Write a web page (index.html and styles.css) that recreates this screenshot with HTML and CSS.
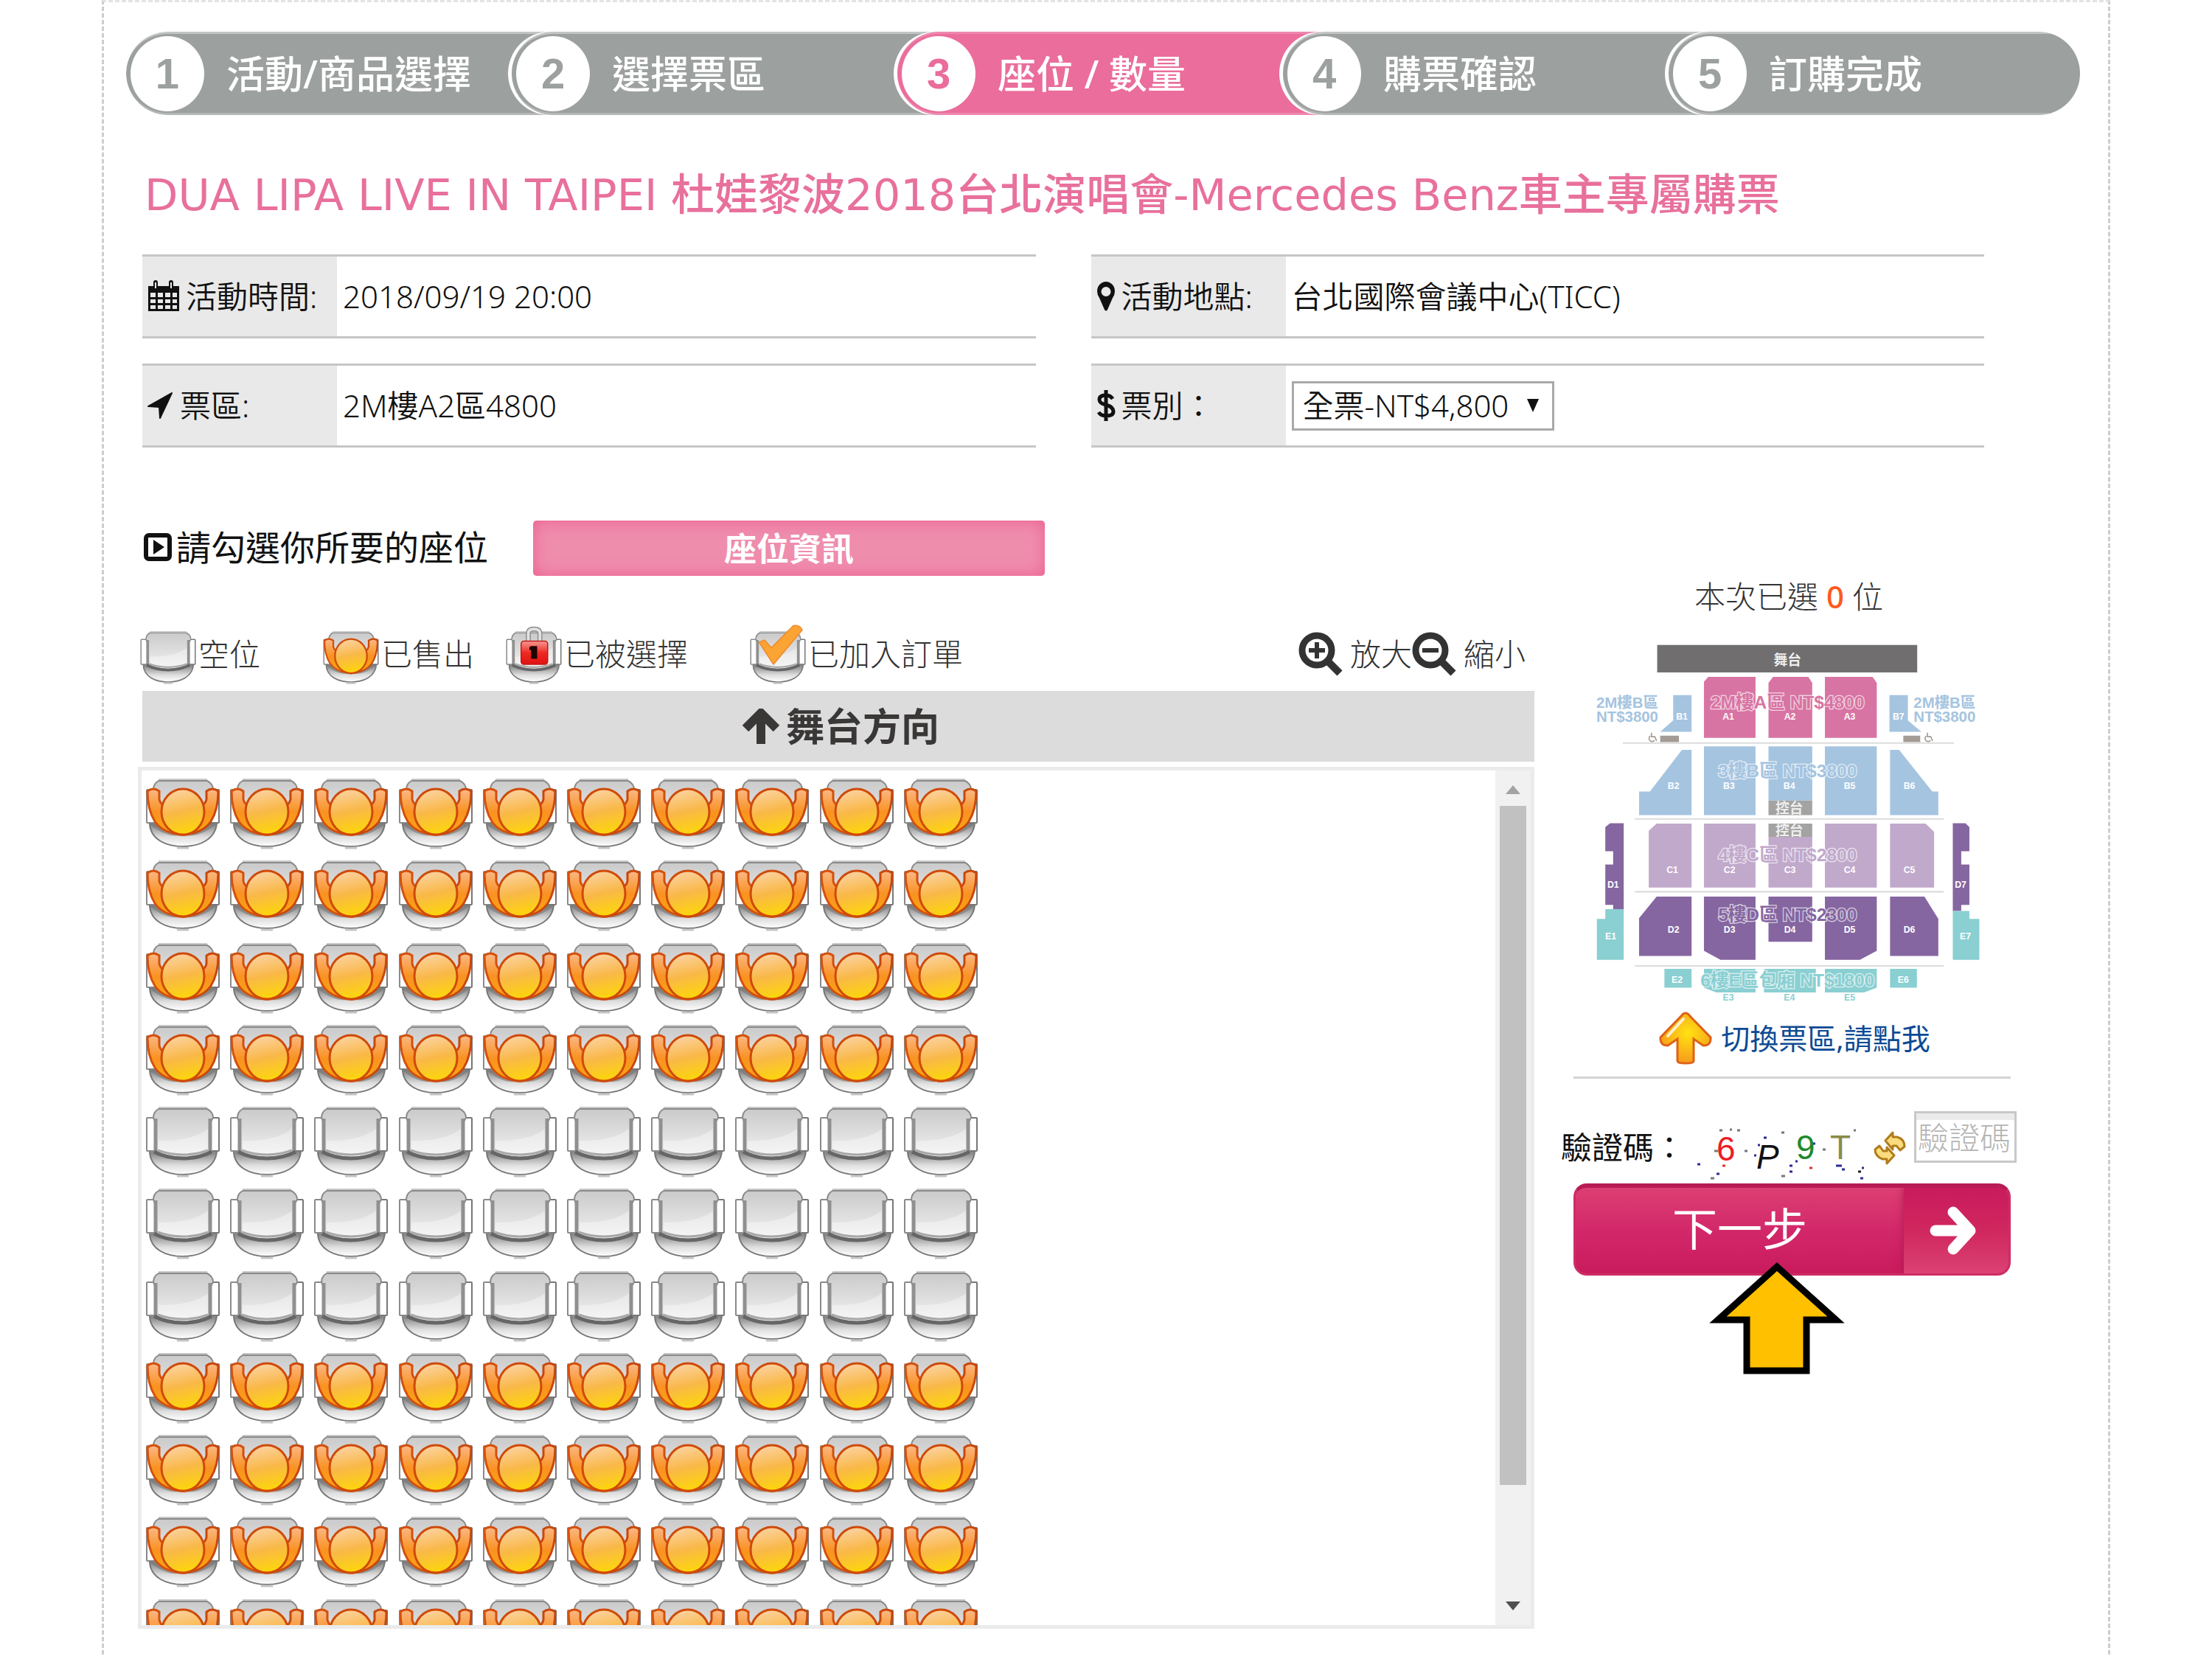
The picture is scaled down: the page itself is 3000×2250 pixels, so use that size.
FILE: index.html
```html
<!DOCTYPE html>
<html lang="zh-Hant">
<head>
    <meta charset="UTF-8">
    <meta name="viewport" content="width=device-width, initial-scale=1.0">
    <title>座位 / 數量</title>
    <link rel="stylesheet" href="styles.css">
</head>
<body>

<!-- Seat symbols -->
<svg class="symbols" aria-hidden="true">
    <defs>
        <linearGradient id="g-back" x1="0" y1="0" x2="0" y2="1">
            <stop offset="0" stop-color="#cacaca"/>
            <stop offset="1" stop-color="#f2f2f2"/>
        </linearGradient>
        <linearGradient id="g-base" x1="0" y1="0" x2="0" y2="1">
            <stop offset="0.1" stop-color="#8a8a8a"/>
            <stop offset="0.6" stop-color="#dedede"/>
            <stop offset="1" stop-color="#ffffff"/>
        </linearGradient>
        <linearGradient id="g-head" x1="0.3" y1="0" x2="0.5" y2="1">
            <stop offset="0" stop-color="#fcd3a4"/>
            <stop offset="0.5" stop-color="#f9b848"/>
            <stop offset="1" stop-color="#fdd60a"/>
        </linearGradient>
        <linearGradient id="g-arm" x1="0" y1="0" x2="0" y2="1">
            <stop offset="0" stop-color="#fbb887"/>
            <stop offset="0.5" stop-color="#f99222"/>
            <stop offset="1" stop-color="#fba60e"/>
        </linearGradient>
        <linearGradient id="g-lock" x1="0" y1="0" x2="0" y2="1">
            <stop offset="0" stop-color="#f79a94"/>
            <stop offset="0.5" stop-color="#ee2a22"/>
            <stop offset="1" stop-color="#e01212"/>
        </linearGradient>
        <radialGradient id="g-up" cx="0.55" cy="0.4" r="0.6">
            <stop offset="0" stop-color="#ffe312"/>
            <stop offset="1" stop-color="#f79a1c"/>
        </radialGradient>
    </defs>
    <symbol id="seat-frame" viewBox="0 0 100 96" overflow="visible">
        <path d="M5 60Q5 76 20 85Q32 92 50 92Q68 92 80 85Q95 76 96 60Z" fill="url(#g-base)" stroke="#777" stroke-width="2"/>
        <path d="M42 94H58" stroke="#c4c4c4" stroke-width="3"/>
        <rect x="1" y="15" width="13" height="45" rx="1" fill="#fff" stroke="#8a8a8a" stroke-width="2"/>
        <rect x="86" y="15" width="13" height="45" rx="1" fill="#fff" stroke="#777" stroke-width="2"/>
        <path d="M10 15Q10 7 17 3H83Q91 7 91 15L87 22V61Q70 69 50 69Q30 69 13 61V22Z" fill="url(#g-back)" stroke="#8a8a8a" stroke-width="2"/>
        <path d="M17 1H83" stroke="#c8c8c8" stroke-width="2"/>
    </symbol>
    <symbol id="seat-free" viewBox="0 0 100 96" overflow="visible">
        <use href="#seat-frame" width="100" height="96"/>
        <path d="M17 46Q62 47 84 30V60Q70 64 50 64Q30 64 17 60Z" fill="#fff" opacity="0.35"/>
        <path d="M13 16V61M87 16V61" stroke="#909090" stroke-width="5"/>
        <path d="M11 61Q28 70 50 70Q72 70 89 61" fill="none" stroke="#666" stroke-width="5"/>
        <path d="M16 59Q32 65 50 65Q68 65 84 59" fill="none" stroke="#a8a8a8" stroke-width="3"/>
    </symbol>
    <symbol id="seat-sold" viewBox="0 0 100 96" overflow="visible">
        <use href="#seat-frame" width="100" height="96"/>
        <path d="M3 60Q28 82 50 76Q72 82 97 60Z" fill="#777" opacity="0.6"/>
        <path d="M2 17Q10 11 18 17V28Q19 33 24 37V56L46 76Q22 73 12 58Q2 42 2 17Z" fill="url(#g-arm)" stroke="#d4500c" stroke-width="3"/>
        <path d="M98 17Q90 11 82 17V28Q81 33 76 37V56L54 76Q78 73 88 58Q98 42 98 17Z" fill="url(#g-arm)" stroke="#c8480c" stroke-width="3"/>
        <ellipse cx="50" cy="45" rx="29" ry="31" fill="url(#g-head)" stroke="#cf4a0a" stroke-width="3"/>
    </symbol>
    <symbol id="seat-locked" viewBox="0 0 100 96" overflow="visible">
        <use href="#seat-free" width="100" height="96"/>
        <path d="M40 20V4Q40 -4 50 -4Q61 -4 61 4V20" fill="none" stroke="#8f8f8f" stroke-width="9"/>
        <path d="M40 20V4Q40 -4 50 -4Q61 -4 61 4V20" fill="none" stroke="#e2e2e2" stroke-width="5"/>
        <rect x="27" y="18" width="48" height="42" rx="5" fill="url(#g-lock)" stroke="#c21a14" stroke-width="2"/>
        <path d="M45 27H56V50H45V34H42V29Z" fill="#1c0504"/>
    </symbol>
    <symbol id="seat-added" viewBox="0 0 100 96" overflow="visible">
        <use href="#seat-free" width="100" height="96"/>
        <path d="M16 20L26 16L38 30L78 -10Q90 -12 94 -2L42 60Z" fill="#fba434" stroke="#f08a2a" stroke-width="2" stroke-linejoin="round"/>
    </symbol>
</svg>

<div class="page">
    <ol class="steps">
        <li class="step"><span class="step-no">1</span>活動/商品選擇</li>
        <li class="step"><span class="step-no">2</span>選擇票區</li>
        <li class="step active"><span class="step-no">3</span>座位 / 數量</li>
        <li class="step"><span class="step-no">4</span>購票確認</li>
        <li class="step"><span class="step-no">5</span>訂購完成</li>
    </ol>

    <h1>DUA LIPA LIVE IN TAIPEI 杜娃黎波2018台北演唱會-Mercedes Benz車主專屬購票</h1>

    <dl class="info">
        <div class="info-row">
            <dt>
                <svg width="44" height="44" viewBox="0 0 44 44"><path d="M1 8H8V3Q8 0 11 0T14 3V8H29V3Q29 0 32 0T35 3V8H43V42H1Z" fill="#111"/><path d="M4 17H11V23H4ZM14 17H21V23H14ZM24 17H31V23H24ZM34 17H40V23H34ZM4 26H11V31H4ZM14 26H21V31H14ZM24 26H31V31H24ZM34 26H40V31H34ZM4 34H11V39H4ZM14 34H21V39H14ZM24 34H31V39H24ZM34 34H40V39H34Z" fill="#e9e9e9"/><path d="M11 3V11M32 3V11" stroke="#e9e9e9" stroke-width="2"/></svg>
                活動時間:
            </dt>
            <dd>2018/09/19 20:00</dd>
        </div>
        <div class="info-row">
            <dt>
                <svg width="26" height="40" viewBox="0 0 26 40"><path d="M13 0A12 13 0 0 1 25 13Q25 18 22 22L15 38Q13 41 11 38L4 22Q1 18 1 13A12 13 0 0 1 13 0ZM13 7A6 6 0 0 0 13 20A6 6 0 0 0 13 7Z" fill="#111"/></svg>
                活動地點:
            </dt>
            <dd>台北國際會議中心(TICC)</dd>
        </div>
        <div class="info-row">
            <dt>
                <svg width="36" height="36" viewBox="0 0 36 36"><path d="M33 1L17 35L16 20L1 19Z" fill="#111" stroke="#111" stroke-width="2" stroke-linejoin="round"/></svg>
                票區:
            </dt>
            <dd>2M樓A2區4800</dd>
        </div>
        <div class="info-row">
            <dt>
                <svg width="26" height="44" viewBox="0 0 26 44"><path d="M22 13Q19 8 13 8Q4 8 4 14Q4 19 13 21Q23 24 23 30Q23 36 13 36Q6 36 3 31M13 1V43" fill="none" stroke="#111" stroke-width="5"/></svg>
                <label for="ticket">票別：</label>
            </dt>
            <dd>
                <span class="select-box">
                    <select id="ticket"><option>全票-NT$4,800</option></select>
                    <svg class="caret" width="16" height="18" viewBox="0 0 16 18"><path d="M0 0H16L8 18Z" fill="#111"/></svg>
                </span>
            </dd>
        </div>
    </dl>

    <div class="columns">
        <main>
            <div class="pick-row">
                <h2>
                    <svg width="38" height="38" viewBox="0 0 38 38"><rect x="3" y="3" width="32" height="32" rx="4" fill="none" stroke="#111" stroke-width="6"/><path d="M13 9L28 19L13 29Z" fill="#111"/></svg>
                    請勾選你所要的座位
                </h2>
                <button type="button" class="seat-info">座位資訊</button>
            </div>

            <div class="legend-row">
                <ul class="legend">
                    <li><svg width="76" height="72"><use href="#seat-free"/></svg>空位</li>
                    <li><svg width="76" height="72"><use href="#seat-sold"/></svg>已售出</li>
                    <li><svg width="76" height="72"><use href="#seat-locked"/></svg>已被選擇</li>
                    <li><svg width="76" height="72"><use href="#seat-added"/></svg>已加入訂單</li>
                </ul>
                <div class="zoom">
                    <button type="button">
                        <svg width="60" height="60" viewBox="0 0 60 60"><circle cx="25" cy="25" r="20" fill="none" stroke="#333" stroke-width="9"/><path d="M40 40L56 56" stroke="#333" stroke-width="10"/><path d="M14 25H36M25 14V36" stroke="#333" stroke-width="6"/></svg>
                        放大
                    </button>
                    <button type="button">
                        <svg width="60" height="60" viewBox="0 0 60 60"><circle cx="25" cy="25" r="20" fill="none" stroke="#333" stroke-width="9"/><path d="M40 40L56 56" stroke="#333" stroke-width="10"/><path d="M14 25H36" stroke="#333" stroke-width="6"/></svg>
                        縮小
                    </button>
                </div>
            </div>

            <div class="stage">
                <svg width="52" height="48" viewBox="0 0 52 48"><path d="M26 48V8M5 27L26 6L47 27" fill="none" stroke="#3a3737" stroke-width="12"/></svg>
                舞台方向
            </div>

            <div class="seat-box">
                <div class="seats" id="seats"></div>
                <div class="scrollbar">
                    <svg width="20" height="12" viewBox="0 0 20 12"><path d="M10 0L20 12H0Z" fill="#a3a3a3"/></svg>
                    <div class="thumb"></div>
                    <svg width="20" height="12" viewBox="0 0 20 12"><path d="M0 0H20L10 12Z" fill="#505050"/></svg>
                </div>
            </div>
        </main>

        <aside>
            <p class="picked">本次已選 <b>0</b> 位</p>

            <svg class="map" viewBox="150 240 1320 1210">
                <rect x="364" y="254" width="862" height="91" fill="#706e6f"/>
                <g fill="#d874a3">
                    <path d="M519 376L533 360H690V562H519Z"/>
                    <path d="M733 380L748 360H865L878 380V562H733Z"/>
                    <path d="M920 360H1078L1092 380V562H920Z"/>
                </g>
                <g fill="#a5c4e0">
                    <path d="M417 420H478V542H374L417 504Z"/>
                    <path d="M1134 420H1195V504L1240 542H1134Z"/>
                    <path d="M446 602H478V818H304V740H340Z"/>
                    <path d="M519 590H690V818H519ZM733 590H878V770H733ZM920 590H1092V818H920Z"/>
                    <path d="M1136 602H1166L1276 740H1296V818H1136Z"/>
                </g>
                <path d="M733 770H878V818H733ZM733 846H878V890H733Z" fill="#a3a3a3"/>
                <path d="M374 555H436V576H374ZM1180 555H1236V576H1180Z" fill="#a39b96"/>
                <path d="M250 579H1348M290 831H1314M290 1072H1314M290 1318H1314" stroke="#dcdcdc" stroke-width="5"/>
                <g fill="none" stroke="#a39b96" stroke-width="4">
                    <path d="M345 545V558H356L362 572M341 556A10 10 0 1 0 355 570"/>
                    <path d="M1260 545V558H1271L1277 572M1256 556A10 10 0 1 0 1270 570"/>
                </g>
                <g fill="#c1a9cb">
                    <path d="M336 870L362 846H478V1058H336Z"/>
                    <path d="M519 846H690V1058H519ZM733 890H878V1058H733ZM920 846H1092V1058H920Z"/>
                    <path d="M1136 846H1254L1282 874V1058H1136Z"/>
                </g>
                <g fill="#8566a0">
                    <path d="M192 858L208 845H253V1136H218V1116H192V982H218V938H192Z"/>
                    <path d="M1344 845H1386L1399 858V938H1372V982H1399V1116H1372V1136H1344Z"/>
                    <path d="M362 1088H478V1285H304V1160Z"/>
                    <path d="M519 1088H690V1298H574L519 1268ZM733 1088H878V1238H733ZM920 1088H1092V1268L1036 1298H920Z"/>
                    <path d="M1136 1088H1250L1296 1162V1285H1136Z"/>
                </g>
                <g fill="#8acfd2">
                    <path d="M192 1130H253V1298H164V1162H192Z"/>
                    <path d="M1344 1136H1399V1162H1432V1298H1344Z"/>
                    <path d="M388 1328H478V1390H388ZM1136 1328H1225V1390H1136Z"/>
                    <path d="M519 1328H690V1406H560L519 1390ZM718 1328H890V1406H718ZM920 1328H1092V1390L1050 1406H920Z"/>
                </g>
                <g class="map-block">
                    <text x="796" y="320" class="map-stage">舞台</text>
                    <text x="802" y="812" class="map-stage">控台</text>
                    <text x="802" y="886" class="map-stage">控台</text>
                    <text x="446" y="502">B1</text><text x="1164" y="502">B7</text>
                    <text x="600" y="502">A1</text><text x="804" y="502">A2</text><text x="1002" y="502">A3</text>
                    <text x="418" y="732">B2</text><text x="602" y="732">B3</text><text x="802" y="732">B4</text><text x="1002" y="732">B5</text><text x="1200" y="732">B6</text>
                    <text x="414" y="1010">C1</text><text x="604" y="1010">C2</text><text x="804" y="1010">C3</text><text x="1002" y="1010">C4</text><text x="1200" y="1010">C5</text>
                    <text x="218" y="1058">D1</text><text x="1370" y="1058">D7</text>
                    <text x="418" y="1208">D2</text><text x="604" y="1208">D3</text><text x="804" y="1208">D4</text><text x="1002" y="1208">D5</text><text x="1200" y="1208">D6</text>
                    <text x="210" y="1230">E1</text><text x="1386" y="1230">E7</text>
                    <text x="430" y="1374">E2</text><text x="1180" y="1374">E6</text>
                </g>
                <g class="map-price">
                    <text x="796" y="464" fill="#d874a3">2M樓A區 NT$4800</text>
                    <text x="796" y="692" fill="#a5c4e0">3樓B區 NT$3800</text>
                    <text x="796" y="972" fill="#c1a9cb">4樓C區 NT$2800</text>
                    <text x="796" y="1170" fill="#8566a0">5樓D區 NT$2300</text>
                    <text x="796" y="1386" fill="#8acfd2">6樓E區包廂 NT$1800</text>
                </g>
                <g class="map-side">
                    <text x="162" y="462">2M樓B區</text><text x="162" y="510">NT$3800</text>
                    <text x="1214" y="462">2M樓B區</text><text x="1214" y="510">NT$3800</text>
                </g>
                <g class="map-tail">
                    <text x="600" y="1434">E3</text><text x="802" y="1434">E4</text><text x="1002" y="1434">E5</text>
                </g>
            </svg>

            <a class="switch" href="#">
                <svg width="72" height="72" viewBox="0 0 72 72"><path d="M36 2Q39 2 41 5L70 35Q71 46 60 46L47 37V67Q47 70 36 70T25 67V37L12 46Q1 46 2 35L31 5Q33 2 36 2Z" fill="url(#g-up)" stroke="#dd6218" stroke-width="3"/><path d="M12 33L33 10" stroke="#fff0d0" stroke-width="4" stroke-linecap="round"/></svg>
                切換票區,請點我
            </a>
            <hr>

            <div class="captcha-row">
                <label for="captcha">驗證碼：</label>
                <svg class="captcha" width="236" height="88" viewBox="0 0 236 88">
                    <text x="34" y="62" fill="#ee1c24">6</text>
                    <text x="88" y="73" fill="#111" font-style="italic">P</text>
                    <text x="142" y="60" fill="#1e8a2c">9</text>
                    <text x="188" y="60" fill="#8a8a4a">T</text>
                    <path d="M38 21H42M52 20H55M62 21H66M122 24H126M220 21H223M31 49H36M72 49H76M178 47H182M122 83H127M26 86H31" stroke="#777" stroke-width="3"/>
                    <path d="M8 67H12M34 80H38M98 31H102M90 41H93M85 55H88M165 39H168M133 69H137M133 77H137M196 69H204M204 74H208M231 72H234M229 86H233M141 63H144" stroke="#2c2c96" stroke-width="3"/>
                    <path d="M42 69H46M160 72H164" stroke="#e03030" stroke-width="3"/>
                    <path d="M226 77H230" stroke="#222" stroke-width="3"/>
                </svg>
                <svg width="48" height="48" viewBox="0 0 48 48"><path d="M18 15L28 4V10H34Q44 13 44 23L38 28L33 22H28V27Z" fill="#fbdc7c" stroke="#b07c1c" stroke-width="3" stroke-linejoin="round"/><path d="M30 35L20 46V40H14Q4 36 4 27L10 22L15 29H20V24Z" fill="#fbdc7c" stroke="#b07c1c" stroke-width="3" stroke-linejoin="round"/></svg>
                <input type="text" id="captcha" name="captcha" placeholder="驗證碼">
            </div>

            <div class="next-wrap">
                <button type="button" class="next">
                    <span class="next-text">下一步</span>
                    <span class="next-arrow">
                        <svg width="68" height="72" viewBox="0 0 68 72"><path d="M10 36H52M34 11L57 36L34 61" fill="none" stroke="#fff" stroke-width="15" stroke-linecap="round" stroke-linejoin="round"/></svg>
                    </span>
                </button>
                <svg class="pointer" width="188" height="154" viewBox="0 0 188 154"><path d="M94 7L174 79H134V148H53V79H14Z" fill="#ffc000" stroke="#000" stroke-width="9"/></svg>
            </div>
        </aside>
    </div>
</div>

<script src="script.js"></script>
</body>
</html>
```

FILE: styles.css
```css
* {
    box-sizing: border-box;
}
body {
    margin: 0;
    background-color: #fff;
    color: #111;
    font-family: "Noto Sans", "Noto Sans CJK TC", sans-serif;
    font-size: 42px;
    line-height: 60px;
}
h1, h2, p, ol, ul, dl, dd {
    margin: 0;
    padding: 0;
    list-style: none;
}
button, select, input {
    font: inherit;
    color: inherit;
    padding: 0;
    background: none;
    border: none;
}
svg {
    flex: none;
}
.symbols {
    position: absolute;
    width: 0;
    height: 0;
}
.page {
    margin: 0 138px;
    padding: 40px 0 35px;
    border: 3px dashed #cdcdcd;
    border-top-color: #e3e3e3;
    border-bottom: none;
}

/* Steps */
.steps {
    display: grid;
    grid-template-columns: repeat(4, 15fr) 16fr;
    margin: 0 38px 0 30px;
    border-radius: 57px;
    overflow: hidden;
}
.step {
    display: flex;
    align-items: center;
    gap: 30px;
    height: 113px;
    margin-right: -60px;
    padding-left: 6px;
    background-color: #9ca09e;
    border-top: 3px solid #c3c5c4;
    border-bottom: 3px solid #b4b7b5;
    border-radius: 57px 0 0 57px;
    box-shadow: -5px 0 0 #fff;
    color: #fff;
    font-size: 52px;
    font-weight: 500;
}
.step:last-child {
    margin-right: 0;
}
.step-no {
    width: 100px;
    height: 102px;
    border-radius: 50%;
    background-color: #fff;
    color: #9ca09e;
    font-family: "Liberation Sans", Arial, sans-serif;
    font-size: 58px;
    font-weight: bold;
    line-height: 102px;
    text-align: center;
}
.step.active {
    background-color: #ea6d9b;
    border-color: #ee88ae;
}
.step.active .step-no {
    color: #ea6d9b;
}

h1 {
    margin: 67px 55px 0;
    color: #e8709c;
    font-family: "DejaVu Sans", "Noto Sans CJK TC", sans-serif;
    font-size: 59px;
    font-weight: 500;
    line-height: 84px;
}

/* Event info */
.info {
    display: grid;
    grid-template-columns: 1fr 1fr;
    gap: 34px 75px;
    margin: 38px 168px 0 52px;
    font-weight: 350;
}
.info-row {
    display: flex;
    height: 114px;
    border-top: 3px solid #c6c6c6;
    border-bottom: 3px solid #c6c6c6;
}
dt {
    display: flex;
    align-items: center;
    gap: 8px;
    width: 264px;
    padding-left: 7px;
    background-color: #e9e9e9;
}
dd {
    display: flex;
    align-items: center;
    padding-left: 8px;
}
.select-box {
    display: flex;
    align-items: center;
    width: 356px;
    height: 67px;
    padding: 0 18px 0 12px;
    border: 3px solid #a9a9a9;
}
select {
    flex: 1;
    appearance: none;
    line-height: 60px;
    outline: none;
}

/* Seats and sidebar */
.columns {
    display: flex;
    gap: 36px;
    margin: 99px 124px 0 46px;
}
main {
    flex: 1;
}
.pick-row {
    display: flex;
    align-items: center;
    height: 75px;
    padding-left: 8px;
}
h2 {
    display: flex;
    align-items: center;
    gap: 6px;
    width: 528px;
    padding-bottom: 4px;
    font-size: 47px;
    font-weight: normal;
}
.seat-info {
    width: 694px;
    height: 75px;
    border-radius: 5px;
    background-color: #ef8dad;
    box-shadow: inset 0 0 22px #ec5f92;
    color: #fff;
    font-size: 44px;
    font-weight: bold;
}
.legend-row {
    display: flex;
    justify-content: space-between;
    align-items: flex-end;
    height: 156px;
    padding: 0 12px 9px 3px;
    color: #333;
    line-height: 82px;
    font-weight: 300;
}
.legend {
    display: grid;
    grid-template-columns: 248px 248px 331px auto;
}
.legend li {
    display: flex;
    align-items: flex-end;
    gap: 3px;
}
.legend svg {
    overflow: visible;
}
.zoom {
    display: flex;
}
.zoom button {
    display: flex;
    align-items: center;
    gap: 10px;
}
.stage {
    display: flex;
    justify-content: center;
    align-items: center;
    gap: 8px;
    height: 96px;
    margin-left: 6px;
    padding-left: 6px;
    background-color: #dcdcdc;
    color: #3a3737;
    font-size: 52px;
    font-weight: bold;
}
.seat-box {
    display: flex;
    justify-content: space-between;
    height: 1169px;
    margin-top: 7px;
    border: 5px solid #ebebeb;
    overflow: hidden;
}
.seats {
    display: grid;
    grid-template-columns: repeat(10, 1fr);
    grid-template-rows: repeat(11, 1fr);
    width: 1142px;
    height: 1224px;
    margin: 11px 0 0 6px;
}
.seat {
    display: block;
    width: 100px;
    height: 96px;
}
.seat svg {
    display: block;
    width: 100px;
    height: 96px;
}
.scrollbar {
    display: flex;
    flex-direction: column;
    align-items: center;
    width: 48px;
    padding: 20px 0;
    background-color: #f1f1f1;
}
.thumb {
    width: 36px;
    height: 921px;
    margin: 16px 0 auto;
    background-color: #c1c1c1;
}

aside {
    width: 618px;
    padding-top: 73px;
}
.picked {
    text-align: center;
    color: #333;
    font-weight: 300;
}
.picked b {
    color: #fb5a1e;
    font-weight: 500;
}
.map {
    display: block;
    width: 540px;
    margin: 30px 35px 0 auto;
}
.map text {
    font-family: "Liberation Sans", "Noto Sans CJK TC", sans-serif;
    font-weight: bold;
}
.map-block text {
    fill: #fff;
    font-size: 30px;
    text-anchor: middle;
}
.map-block .map-stage {
    font-size: 46px;
    fill: #eee;
}
.map-price text {
    font-size: 60px;
    text-anchor: middle;
    stroke: #fff;
    stroke-width: 6px;
    stroke-opacity: 0.7;
    paint-order: stroke;
}
.map-side text {
    fill: #a5c4e0;
    font-size: 50px;
}
.map-tail text {
    fill: #8acfd2;
    font-size: 30px;
    text-anchor: middle;
}
.switch {
    display: flex;
    justify-content: center;
    align-items: center;
    gap: 12px;
    height: 76px;
    margin-top: 6px;
    padding-left: 16px;
    color: #0d4a94;
    font-size: 39px;
    text-decoration: none;
}
hr {
    height: 3px;
    margin: 14px 8px 0 17px;
    border: none;
    background-color: #d3d3d3;
}
.captcha-row {
    display: flex;
    align-items: center;
    gap: 9px;
    height: 98px;
    margin-top: 44px;
}
.captcha-row label {
    width: 168px;
    white-space: nowrap;
}
.captcha text {
    font-family: "Liberation Sans", Arial, sans-serif;
    font-size: 46px;
}
.captcha-row input {
    flex: 1;
    align-self: flex-start;
    min-width: 0;
    height: 70px;
    padding: 0 2px;
    border: 3px solid #c8c8c8;
    box-shadow: inset 0 9px 0 #ebebeb;
    outline: none;
}
.captcha-row input::placeholder {
    color: #b5b5b5;
    font-weight: 300;
}
.next-wrap {
    position: relative;
    margin: 0 8px 0 17px;
}
.next {
    display: flex;
    width: 100%;
    height: 125px;
    border-radius: 18px;
    border: 3px solid #cc2d66;
    border-top: 6px solid #b81c55;
    background: linear-gradient(#dd3f72, #d2286a 50%, #c91b5c);
    color: #fff;
    font-size: 61px;
    overflow: hidden;
}
.next-text {
    flex: 1;
    line-height: 112px;
}
.next-arrow {
    display: flex;
    justify-content: center;
    align-items: center;
    width: 142px;
    height: 116px;
    padding-right: 8px;
    background: linear-gradient(#c91b5c, #d0275f 50%, #db4273);
    box-shadow: 0 0 10px #a81a4c;
}
.pointer {
    position: absolute;
    left: 182px;
    top: 106px;
}
```

FILE: script.js
```js
// Row status, front to back
const rows = ['sold', 'sold', 'sold', 'sold', 'free', 'free', 'free', 'sold', 'sold', 'sold', 'sold'];
const seats = document.getElementById('seats');

rows.forEach(function(status, row) {
    for (let no = 1; no <= 10; no++) {
        const seat = document.createElement('button');
        seat.type = 'button';
        seat.className = 'seat';
        seat.disabled = status === 'sold';
        seat.setAttribute('aria-label', `${row + 1}排${no}號`);
        seat.innerHTML = `<svg><use href="#seat-${status}"/></svg>`;
        seats.appendChild(seat);
    }
});
```
